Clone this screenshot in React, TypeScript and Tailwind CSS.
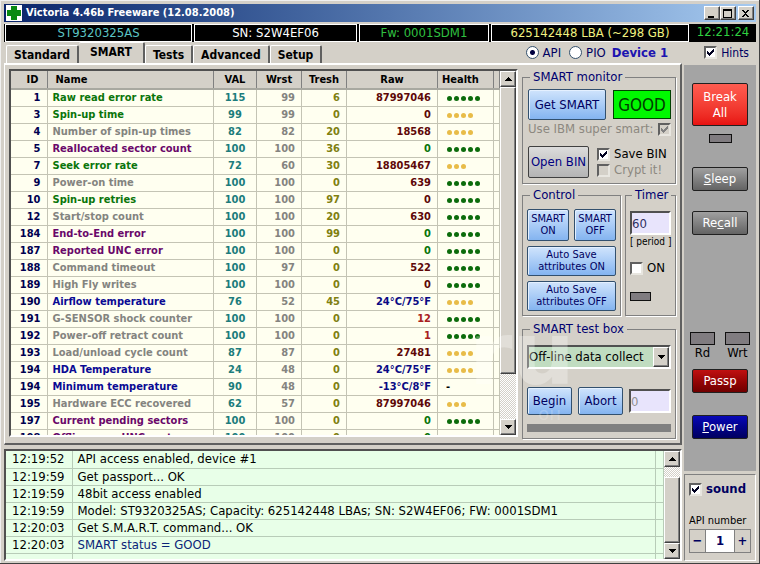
import React, { useState } from 'react';
import clsx from 'clsx';

type Kind = 'green' | 'gray' | 'purple' | 'blue';

interface Attribute {
  id: number;
  name: string;
  kind: Kind;
  val: number;
  wrst: number;
  tresh: number;
  raw: string;
  rawTone: 'maroon' | 'green' | 'blue' | 'red';
  health: number;
}

const attr = (
  id: number, name: string, kind: Kind, val: number, wrst: number, tresh: number,
  raw: string, rawTone: Attribute['rawTone'], health: number,
): Attribute => ({ id, name, kind, val, wrst, tresh, raw, rawTone, health });

const ATTRIBUTES: Attribute[] = [
  attr(1, 'Raw read error rate', 'green', 115, 99, 6, '87997046', 'maroon', 5),
  attr(3, 'Spin-up time', 'green', 99, 99, 0, '0', 'maroon', 4),
  attr(4, 'Number of spin-up times', 'gray', 82, 82, 20, '18568', 'maroon', 4),
  attr(5, 'Reallocated sector count', 'purple', 100, 100, 36, '0', 'green', 5),
  attr(7, 'Seek error rate', 'green', 72, 60, 30, '18805467', 'maroon', 3),
  attr(9, 'Power-on time', 'gray', 100, 100, 0, '639', 'maroon', 5),
  attr(10, 'Spin-up retries', 'green', 100, 100, 97, '0', 'maroon', 5),
  attr(12, 'Start/stop count', 'gray', 100, 100, 20, '630', 'maroon', 5),
  attr(184, 'End-to-End error', 'purple', 100, 100, 99, '0', 'green', 5),
  attr(187, 'Reported UNC error', 'purple', 100, 100, 0, '0', 'green', 5),
  attr(188, 'Command timeout', 'gray', 100, 97, 0, '522', 'maroon', 5),
  attr(189, 'High Fly writes', 'gray', 100, 100, 0, '0', 'maroon', 5),
  attr(190, 'Airflow temperature', 'blue', 76, 52, 45, '24°C/75°F', 'blue', 4),
  attr(191, 'G-SENSOR shock counter', 'gray', 100, 100, 0, '12', 'red', 5),
  attr(192, 'Power-off retract count', 'gray', 100, 100, 0, '1', 'red', 5),
  attr(193, 'Load/unload cycle count', 'gray', 87, 87, 0, '27481', 'maroon', 4),
  attr(194, 'HDA Temperature', 'blue', 24, 48, 0, '24°C/75°F', 'blue', 4),
  attr(194, 'Minimum temperature', 'blue', 90, 48, 0, '-13°C/8°F', 'blue', 0),
  attr(195, 'Hardware ECC recovered', 'gray', 62, 57, 0, '87997046', 'maroon', 3),
  attr(197, 'Current pending sectors', 'purple', 100, 100, 0, '0', 'green', 5),
  attr(198, 'Offline scan UNC sectors', 'purple', 100, 100, 0, '0', 'green', 5),
];

const NAME_COLOR = {
  green: 'text-[#0a750a]',
  gray: 'text-[#848480]',
  purple: 'text-[#6a086a]',
  blue: 'text-[#0a0a94]',
};

const RAW_COLOR = {
  maroon: 'text-[#5e0808]',
  green: 'text-[#0a750a]',
  blue: 'text-[#0a0a84]',
  red: 'text-[#a82020]',
};

const LOG = [
  ['12:19:52', 'API access enabled, device #1'],
  ['12:19:59', 'Get passport... OK'],
  ['12:19:59', '48bit access enabled'],
  ['12:19:59', 'Model: ST9320325AS; Capacity: 625142448 LBAs; SN: S2W4EF06; FW: 0001SDM1'],
  ['12:20:03', 'Get S.M.A.R.T. command... OK'],
  ['12:20:03', 'SMART status = GOOD'],
];

const RAISED = 'bg-[#d4d0c8] border border-t-white border-l-white border-r-[#404040] border-b-[#404040] shadow-[inset_-1px_-1px_0_#808080]';
const SUNKEN = 'border-2 border-t-[#505050] border-l-[#505050] border-r-white border-b-white';

const CaptionButton = ({ label, children }: { label: string; children: React.ReactNode }) => (
  <button aria-label={label} className={clsx(RAISED, 'w-4 h-[14px] flex items-center justify-center')}>
    <svg width="10" height="9" viewBox="0 0 10 9" shapeRendering="crispEdges">{children}</svg>
  </button>
);

const ArrowIcon = ({ up = false }: { up?: boolean }) => (
  <svg width="7" height="4" viewBox="0 0 7 4" shapeRendering="crispEdges">
    <path d={up ? 'M3 0h1v1h1v1h1v1h1v1H0V3h1V2h1V1h1z' : 'M0 0h7v1H6v1H5v1H4v1H3V3H2V2H1V1H0z'} />
  </svg>
);

const ScrollBar = ({ children }: { children: React.ReactNode }) => (
  <div className="w-4 shrink-0 flex flex-col bg-[repeating-conic-gradient(#ffffff_0_25%,#d4d0c8_0_50%)] bg-[length:2px_2px]">
    <button aria-label="Scroll up" className={clsx(RAISED, 'h-4 shrink-0 flex items-center justify-center')}>
      <ArrowIcon up />
    </button>
    <div className="flex-1 min-h-0 flex flex-col">{children}</div>
    <button aria-label="Scroll down" className={clsx(RAISED, 'h-4 shrink-0 flex items-center justify-center')}>
      <ArrowIcon />
    </button>
  </div>
);

interface CheckProps {
  label: string;
  defaultChecked?: boolean;
  disabled?: boolean;
  before?: boolean;
  className?: string;
}

const Check = ({ label, defaultChecked, disabled, before, className }: CheckProps) => (
  <label className={clsx('flex items-center', before ? 'flex-row-reverse justify-between' : 'gap-1', disabled && 'text-[#8c8880]', className)}>
    <span className="grid shrink-0">
      <input
        type="checkbox"
        defaultChecked={defaultChecked}
        disabled={disabled}
        className={clsx(
          'peer appearance-none col-start-1 row-start-1 size-[13px] border-2 border-t-[#606060] border-l-[#606060] border-r-[#e8e6e0] border-b-[#e8e6e0]',
          disabled ? 'bg-[#d4d0c8]' : 'bg-white',
        )}
      />
      <svg className="col-start-1 row-start-1 m-[3px] invisible peer-checked:visible pointer-events-none" width="7" height="7" viewBox="0 0 7 7" shapeRendering="crispEdges">
        <path d="M0 2h1v1h1v1h1V3h1V2h1V1h1V0h1v3H6v1H5v1H4v1H3v1H2V6H1V5H0z" fill={disabled ? '#808080' : '#000020'} />
      </svg>
    </span>
    <span>{label}</span>
  </label>
);

const BlueButton = ({ className, ...rest }: React.ButtonHTMLAttributes<HTMLButtonElement>) => (
  <button
    {...rest}
    className={clsx(
      'border border-[#32506e] rounded-[2px] bg-linear-to-b from-[#d0e4fc] to-[#84b4f0] text-[#000060] shadow-[inset_1px_1px_0_#e4f0ff]',
      className,
    )}
  />
);

const SideButton = ({ className, ...rest }: React.ButtonHTMLAttributes<HTMLButtonElement>) => (
  <button
    {...rest}
    className={clsx('w-14 mx-auto border border-[#202020] rounded-[2px] text-[13px] leading-4 text-white', className)}
  />
);

const Led = ({ className }: { className?: string }) => (
  <span className={clsx('block border border-[#101010] bg-[#807c80]', className)} />
);

const Group = ({ title, className, children }: { title: string; className?: string; children: React.ReactNode }) => (
  <fieldset className={clsx('border border-[#808080] shadow-[1px_1px_0_#ffffff] min-w-0', className)}>
    <legend className="px-[3px] text-[13px] leading-4 text-[#000070]">{title}</legend>
    {children}
  </fieldset>
);

const Tab = ({ label, active }: { label: string; active?: boolean }) => (
  <button
    role="tab"
    aria-selected={!!active}
    className={clsx(
      'px-[7px] font-bold text-[12px] border-t border-l border-t-white border-l-white border-r-2 border-r-[#606060] rounded-t-[2px] bg-[#d4d0c8]',
      active ? 'h-[21px] w-[66px] border-l-0 pb-1' : 'h-[18px]',
    )}
  >
    {label}
  </button>
);

const TitleBar = () => (
  <div className="h-[18px] shrink-0 flex items-center bg-linear-to-r from-[#0a246a] to-[#a6caf0] pr-[2px]">
    <svg className="ml-[2px]" width="16" height="16" viewBox="0 0 16 16">
      <rect width="16" height="16" fill="#ffffff" />
      <path d="M5 1h6v4h4v6h-4v4H5v-4H1V5h4z" fill="#0a8a12" />
    </svg>
    <h1 className="ml-1 flex-1 text-[11px] font-bold text-white">Victoria 4.46b Freeware (12.08.2008)</h1>
    <CaptionButton label="Minimize"><path d="M1 7h6v2H1z" /></CaptionButton>
    <CaptionButton label="Maximize"><path d="M0 0h9v9H0zM1 2v6h7V2z" fillRule="evenodd" /></CaptionButton>
    <span className="w-[2px]" />
    <CaptionButton label="Close">
      <path d="M1 1h2v1h1v1h1V2h1V1h2v1H7v1H6v1H5v1h1v1h1v1h1v1H6V7H5V6H4v1H3v1H1V7h1V6h1V5h1V4H3V3H2V2H1z" />
    </CaptionButton>
  </div>
);

const InfoStrip = () => (
  <div className="mt-[2px] h-[18px] shrink-0 flex gap-[2px] bg-black px-px text-[13px] leading-4 text-center whitespace-nowrap [&>span]:border [&>span]:border-white">
    <span className="flex-[188] text-[#5cc4c4]">ST9320325AS</span>
    <span className="flex-[163] text-white">SN: S2W4EF06</span>
    <span className="flex-[130] text-[#30c040]">Fw: 0001SDM1</span>
    <span className="flex-[199] text-[#f0f080]">625142448 LBA (~298 GB)</span>
    <time className="w-[64px] text-[#30d040]">12:21:24</time>
  </div>
);

const DeviceRadio = ({ label, checked }: { label: string; checked?: boolean }) => (
  <label className="flex items-center gap-1 text-[13px] text-[#000060]">
    <input
      type="radio"
      name="device-mode"
      defaultChecked={checked}
      className="appearance-none size-[13px] rounded-full border border-[#34506c] bg-white checked:bg-[radial-gradient(circle,#000040_2px,#ffffff_3px)]"
    />
    {label}
  </label>
);

const AttributeTable = () => (
  <div className={clsx(SUNKEN, 'mb-[2px] flex flex-1 min-w-0 min-h-0 bg-[#fffff0]')}>
    <div className="flex-1 min-w-0 overflow-hidden">
      <table className="w-full table-fixed border-collapse font-bold text-[11px] leading-4">
        <colgroup>
          <col className="w-9" />
          <col />
          <col className="w-[43px]" />
          <col className="w-[45px]" />
          <col className="w-[45px]" />
          <col className="w-[91px]" />
          <col className="w-[56px]" />
          <col className="w-[6px]" />
        </colgroup>
        <thead>
          <tr className="h-[18px] bg-[#d4d0c8] [&>th]:p-0 [&>th]:border-r [&>th]:border-r-[#808080] [&>th]:border-b-2 [&>th]:border-b-[#a8a8a0]">
            <th className="text-right"><span className="pr-2">ID</span></th>
            <th className="text-left"><span className="pl-2">Name</span></th>
            <th>VAL</th>
            <th>Wrst</th>
            <th>Tresh</th>
            <th>Raw</th>
            <th className="text-left"><span className="pl-1">Health</span></th>
            <th />
          </tr>
        </thead>
        <tbody>
          {ATTRIBUTES.map((a, i) => (
            <tr key={i} className="h-[17px] [&>td]:py-0 [&>td]:border-r [&>td]:border-b [&>td]:border-[#c4c4b4]">
              <td className="pr-[6px] text-right text-[#000050]">{a.id}</td>
              <td className={clsx('pl-[5px] whitespace-nowrap', NAME_COLOR[a.kind])}>{a.name}</td>
              <td className="text-center text-[#1c7c7c]">{a.val}</td>
              <td className="pr-[6px] text-right text-[#848480]">{a.wrst}</td>
              <td className="pr-[6px] text-right text-[#808010]">{a.tresh}</td>
              <td className={clsx('pr-[6px] text-right', RAW_COLOR[a.rawTone])}>{a.raw}</td>
              <td className="pl-2">
                {a.health === 0 ? '-' : (
                  <span className="flex gap-[2px] pl-px">
                    {Array.from({ length: a.health }, (_, n) => (
                      <span key={n} className={clsx('size-[5px] rounded-full', a.health === 5 ? 'bg-[#0c6c0c]' : 'bg-[#e8bc48]')} />
                    ))}
                  </span>
                )}
              </td>
              <td />
            </tr>
          ))}
        </tbody>
      </table>
    </div>
    <ScrollBar>
      <div className={clsx(RAISED, 'flex-[290]')} />
      <div className="flex-[46]" />
    </ScrollBar>
  </div>
);

const MonitorGroup = () => (
  <Group title="SMART monitor" className="pl-[5px] pr-1 pt-1 pb-[5px] [&>legend]:ml-[2px]">
    <div className="flex items-center justify-between">
      <BlueButton className="w-[78px] h-[31px] text-[13px]">Get SMART</BlueButton>
      <output className="w-[58px] h-[29px] border border-[#004000] bg-[#00f800] text-center text-[17px] leading-7 text-[#003c00]">GOOD</output>
    </div>
    <Check label="Use IBM super smart:" defaultChecked disabled before className="h-[18px] text-[13px]" />
    <div className="mt-2 flex gap-2">
      <button className="w-[61px] h-8 border border-[#404040] rounded-[2px] bg-linear-to-b from-[#dcdcdc] to-[#b4b4b4] text-[13px] text-[#000080]">
        Open BIN
      </button>
      <div className="flex flex-col text-[13px] leading-4 whitespace-nowrap">
        <Check label="Save BIN" defaultChecked className="text-black" />
        <Check label="Crypt it!" disabled />
      </div>
    </div>
  </Group>
);

const ControlGroup = () => (
  <Group title="Control" className="flex-1 px-1 pt-[6px] pb-1 [&>legend]:ml-[3px]">
    <div className="grid grid-cols-2 gap-[5px] text-[11px] leading-3">
      <BlueButton className="h-8">SMART<br />ON</BlueButton>
      <BlueButton className="h-8">SMART<br />OFF</BlueButton>
      <BlueButton className="col-span-2 h-[30px]">Auto Save<br />attributes ON</BlueButton>
      <BlueButton className="col-span-2 h-[30px]">Auto Save<br />attributes OFF</BlueButton>
    </div>
  </Group>
);

const TimerGroup = () => (
  <Group title="Timer" className="w-[51px] px-1 pt-2 pb-1 [&>legend]:ml-[2px]">
    <label className="block text-[10px] leading-3 text-center whitespace-nowrap">
      <input defaultValue="60" className={clsx(SUNKEN, 'mb-px block w-full h-6 bg-[#e8e4fc] text-[13px] text-[#303060]')} />
      [ period ]
    </label>
    <Check label="ON" className="mt-3 text-[13px] leading-4" />
    <Led className="mt-4 w-[21px] h-[9px]" />
  </Group>
);

const TestGroup = () => {
  const [test, setTest] = useState('offline');
  return (
    <Group title="SMART test box" className="px-1 pt-2 pb-[6px] [&>legend]:ml-[3px]">
      <div className="grid">
        <select
          aria-label="SMART test"
          value={test}
          onChange={(e) => setTest(e.target.value)}
          className={clsx(SUNKEN, 'appearance-none col-start-1 row-start-1 h-6 w-full bg-[#c0dcc0] text-[13px]')}
        >
          <option value="offline">Off-line data collect</option>
          <option value="short">Short self-test</option>
        </select>
        <span className={clsx(RAISED, 'col-start-1 row-start-1 justify-self-end my-[2px] mr-[2px] w-4 flex items-center justify-center pointer-events-none')}>
          <ArrowIcon />
        </span>
      </div>
      <div className="mt-[18px] flex items-center gap-[6px]">
        <BlueButton className="w-[45px] h-7 text-[13px]">Begin</BlueButton>
        <BlueButton className="w-[45px] h-7 text-[13px]">Abort</BlueButton>
        <input aria-label="Test progress" defaultValue="0" className={clsx(SUNKEN, 'min-w-0 flex-1 h-6 bg-[#e8e4fc] text-[13px] text-[#909090]')} />
      </div>
      <div className="mt-[9px] h-2 bg-[#808080]" />
    </Group>
  );
};

const LogPanel = () => (
  <div className={clsx(SUNKEN, 'mt-1 h-[112px] shrink-0 flex bg-[#e8ffe8]')}>
    <div className="flex-1 min-w-0 overflow-hidden">
      <table className="w-full table-fixed border-collapse text-[13px] leading-4">
        <colgroup>
          <col className="w-[66px]" />
          <col />
          <col className="w-2" />
        </colgroup>
        <tbody>
          {[...LOG, ['', '']].map(([time, text], i) => (
            <tr key={i} className="h-[17px] [&>td]:py-0 [&>td]:border-r [&>td]:border-b [&>td]:border-[#b8ccb8]">
              <td className="pl-[6px]">{time}</td>
              <td className={clsx('pl-[5px] whitespace-nowrap', i === LOG.length - 1 && 'text-[#0a2478]')}>{text}</td>
              <td />
            </tr>
          ))}
        </tbody>
      </table>
    </div>
    <ScrollBar>
      <div className="h-[10px]" />
      <div className={clsx(RAISED, 'flex-1')} />
    </ScrollBar>
  </div>
);

const Sidebar = () => (
  <aside className="w-[72px] shrink-0 flex flex-col">
    <div className="mt-[2px] pt-[18px] flex-1 flex flex-col bg-[#a4a4a4]">
      <SideButton className="h-[43px] bg-linear-to-b from-[#ff5c50] to-[#e81010]">Break<br />All</SideButton>
      <Led className="mt-2 mx-auto w-[23px] h-[9px]" />
      <SideButton className="mt-6 h-6 bg-linear-to-b from-[#a0a0a0] to-[#646464]"><u>S</u>leep</SideButton>
      <SideButton className="mt-5 h-6 bg-linear-to-b from-[#a0a0a0] to-[#646464]">Re<u>c</u>all</SideButton>
      <div className="mt-auto flex justify-between px-[6px] text-center text-[13px] leading-4">
        <span><Led className="w-[25px] h-[13px]" />Rd</span>
        <span><Led className="w-[25px] h-[13px]" />Wrt</span>
      </div>
      <SideButton className="mt-2 h-6 bg-linear-to-b from-[#c01010] to-[#700000]">Passp</SideButton>
      <SideButton className="mt-[22px] mb-8 h-6 bg-linear-to-b from-[#0808b8] to-[#000060]"><u>P</u>ower</SideButton>
    </div>
    <div className="mt-[3px] h-[87px] px-1 pt-[6px] border border-t-[#808080] border-l-[#808080] border-r-white border-b-white">
      <Check label="sound" defaultChecked className="text-[13px] leading-4 font-bold text-[#000060]" />
      <label htmlFor="api-number" className="mt-4 block text-[11px] leading-4 whitespace-nowrap">API number</label>
      <div className="flex h-6 border border-[#808080] text-[13px] font-bold text-[#000060]">
        <button aria-label="Decrease" className="w-[15px]">−</button>
        <input id="api-number" defaultValue="1" className="min-w-0 flex-1 border-x border-[#808080] bg-white text-center" />
        <button aria-label="Increase" className="w-[15px]">+</button>
      </div>
    </div>
  </aside>
);

// Seller's stamp laid over the window
const Stamp = () => (
  <div aria-hidden="true" className="absolute right-[185px] bottom-[140px] text-right font-['DejaVu_Sans',sans-serif] pointer-events-none select-none">
    <div className="font-bold text-[88px] leading-[76px] text-white/30">ru</div>
    <div className="mt-3 mr-[14px] text-[18px] leading-5 text-white/20">он</div>
  </div>
);

const App = () => (
  <div className="relative h-screen flex flex-col overflow-hidden bg-[#d4d0c8] px-1 pt-1 pb-[3px] font-['DejaVu_Sans_Condensed','DejaVu_Sans',sans-serif] text-[12px] text-black shadow-[inset_-1px_-1px_0_#404040,inset_1px_1px_0_#f0f0f0]">
    <TitleBar />
    <InfoStrip />
    <nav className="h-[21px] shrink-0 flex items-end pl-[2px] pr-[7px]">
      <div role="tablist" className="flex items-end">
        <Tab label="Standard" />
        <Tab label="SMART" active />
        <Tab label="Tests" />
        <Tab label="Advanced" />
        <Tab label="Setup" />
      </div>
      <div className="ml-auto h-full flex items-center">
        <DeviceRadio label="API" checked />
        <span className="w-2" />
        <DeviceRadio label="PIO" />
        <span className="ml-[6px] text-[13px] font-bold text-[#1c14b0]">Device 1</span>
        <Check label="Hints" defaultChecked className="ml-9 text-[12px] text-[#000060]" />
      </div>
    </nav>
    <div className="flex-1 min-h-0 flex gap-[2px]">
      <div className="flex-1 min-w-0 flex flex-col">
        <main className="flex-1 min-h-0 flex gap-1 border-t-2 border-l border-white border-r-2 border-b-2 border-r-[#606060] border-b-[#606060] p-1">
          <AttributeTable />
          <div className="w-[154px] shrink-0 flex flex-col">
            <MonitorGroup />
            <div className="mt-[3px] flex gap-1">
              <ControlGroup />
              <TimerGroup />
            </div>
            <div className="mt-[5px]">
              <TestGroup />
            </div>
          </div>
        </main>
        <LogPanel />
      </div>
      <Sidebar />
    </div>
    <Stamp />
  </div>
);

export default App;
